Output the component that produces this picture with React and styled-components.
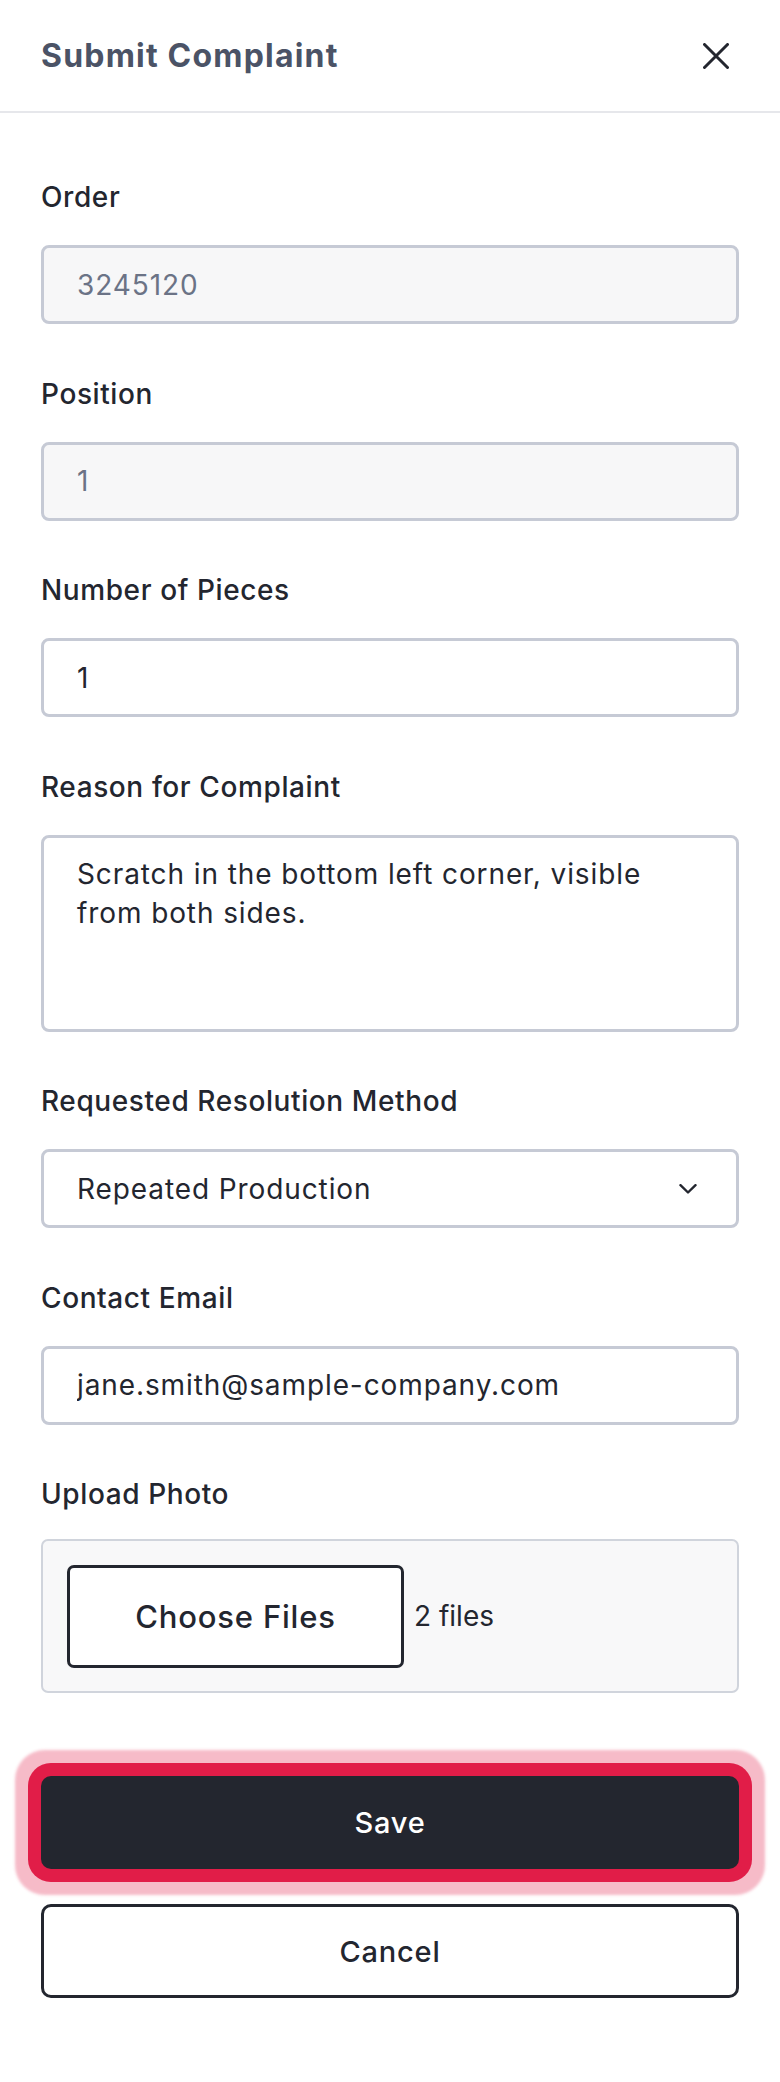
import React, { useState } from 'react'
import styled, { createGlobalStyle } from 'styled-components'

const GlobalStyle = createGlobalStyle`
    * {
        box-sizing: border-box;
    }
    body {
        margin: 0;
        background: #ffffff;
        font-family: "Inter", "Noto Sans", sans-serif;
        color: #23262f;
    }
`

const Panel = styled.div`
    width: 780px;
    min-height: 2082px;
    background: #ffffff;
    display: flex;
    flex-direction: column;
`

const Header = styled.header`
    height: 113px;
    padding: 0 41px;
    display: flex;
    align-items: center;
    justify-content: space-between;
    border-bottom: 2px solid #e6e7eb;
`

const Title = styled.h1`
    margin: 0;
    font-size: 32px;
    font-weight: 700;
    color: #4b5366;
    letter-spacing: 1.2px;
`

const CloseButton = styled.button`
    width: 46px;
    height: 46px;
    padding: 0;
    border: none;
    background: transparent;
    display: flex;
    align-items: center;
    justify-content: center;
    cursor: pointer;
`

const Form = styled.form`
    padding: 64px 41px 0;
    display: flex;
    flex-direction: column;
    gap: 49.5px;
`

const Field = styled.div`
    display: flex;
    flex-direction: column;
    gap: ${props => props.$gap || 28}px;
`

const Label = styled.label`
    font-size: 28px;
    line-height: 40px;
    font-weight: 500;
    letter-spacing: 0.6px;
    color: #23262f;
`

const Input = styled.input`
    width: 100%;
    height: 79px;
    padding: 0 33px;
    border: 3px solid #c6cad5;
    border-radius: 8px;
    background: ${props => (props.disabled ? '#f7f7f8' : '#ffffff')};
    color: ${props => (props.disabled ? '#6b7386' : '#23262f')};
    font-family: inherit;
    font-size: 28px;
    letter-spacing: 0.9px;
    outline: none;
    -webkit-text-fill-color: ${props => (props.disabled ? '#6b7386' : '#23262f')};
    opacity: 1;
`

const TextArea = styled.textarea`
    width: 100%;
    height: 197px;
    padding: 17px 33px;
    border: 3px solid #c6cad5;
    border-radius: 8px;
    background: #ffffff;
    color: #23262f;
    font-family: inherit;
    font-size: 28px;
    letter-spacing: 0.9px;
    line-height: 39px;
    outline: none;
    resize: none;
`

const SelectWrap = styled.div`
    position: relative;
`

const Select = styled.select`
    width: 100%;
    height: 79px;
    padding: 0 80px 0 33px;
    border: 3px solid #c6cad5;
    border-radius: 8px;
    background: #ffffff;
    color: #23262f;
    font-family: inherit;
    font-size: 28px;
    letter-spacing: 0.9px;
    appearance: none;
    outline: none;
`

const Chevron = styled.svg`
    position: absolute;
    right: 42px;
    top: 50%;
    transform: translateY(-50%);
    pointer-events: none;
`

const UploadBox = styled.div`
    height: 154px;
    padding: 0 24px;
    border: 2px solid #d0d4dc;
    border-radius: 7px;
    background: #f8f8f9;
    display: flex;
    align-items: center;
    gap: 10px;
`

const ChooseButton = styled.button`
    width: 337px;
    height: 103px;
    border: 3px solid #23262f;
    border-radius: 7px;
    background: #ffffff;
    color: #23262f;
    font-family: inherit;
    font-size: 31px;
    font-weight: 500;
    letter-spacing: 0.8px;
    cursor: pointer;
`

const FileCount = styled.span`
    font-size: 28px;
    color: #23262f;
`

const Actions = styled.div`
    padding: 83px 41px 0;
    display: flex;
    flex-direction: column;
    gap: 35px;
`

const ActionButton = styled.button`
    width: 100%;
    height: ${props => (props.$primary ? 93 : 94)}px;
    border-radius: 10px;
    border: ${props => (props.$primary ? 'none' : '3px solid #23262f')};
    background: ${props => (props.$primary ? '#23262f' : '#ffffff')};
    color: ${props => (props.$primary ? '#ffffff' : '#23262f')};
    font-family: inherit;
    font-size: 29px;
    font-weight: 500;
    letter-spacing: 0.8px;
    cursor: pointer;
    box-shadow: ${props => (props.$primary
        ? '0 0 0 13px #e11d48, 0 0 3px 26px rgba(225, 29, 72, 0.3)'
        : 'none')};
`

const App = () => {
    const [pieces, setPieces] = useState('1')
    const [reason, setReason] = useState('Scratch in the bottom left corner, visible from both sides.')
    const [method, setMethod] = useState('repeated')
    const [email, setEmail] = useState('jane.smith@sample-company.com')

    return (
        <Panel>
            <GlobalStyle />
            <Header>
                <Title>Submit Complaint</Title>
                <CloseButton type="button" aria-label="Close">
                    <svg width="26" height="26" viewBox="0 0 26 26" fill="none">
                        <path d="M1.5 1.5 24.5 24.5M24.5 1.5 1.5 24.5" stroke="#23262f" strokeWidth="3" strokeLinecap="round" />
                    </svg>
                </CloseButton>
            </Header>
            <Form onSubmit={e => e.preventDefault()}>
                <Field>
                    <Label>Order</Label>
                    <Input value="3245120" disabled readOnly />
                </Field>
                <Field>
                    <Label>Position</Label>
                    <Input value="1" disabled readOnly />
                </Field>
                <Field>
                    <Label>Number of Pieces</Label>
                    <Input value={pieces} onChange={e => setPieces(e.target.value)} />
                </Field>
                <Field>
                    <Label>Reason for Complaint</Label>
                    <TextArea value={reason} onChange={e => setReason(e.target.value)} />
                </Field>
                <Field>
                    <Label>Requested Resolution Method</Label>
                    <SelectWrap>
                        <Select value={method} onChange={e => setMethod(e.target.value)}>
                            <option value="repeated">Repeated Production</option>
                            <option value="discount">Discount</option>
                            <option value="refund">Refund</option>
                        </Select>
                        <Chevron width="18" height="10" viewBox="0 0 18 10" fill="none">
                            <path d="M1.5 1.2 9 8.5l7.5-7.3" stroke="#23262f" strokeWidth="2.4" strokeLinecap="round" strokeLinejoin="round" />
                        </Chevron>
                    </SelectWrap>
                </Field>
                <Field>
                    <Label>Contact Email</Label>
                    <Input type="email" value={email} onChange={e => setEmail(e.target.value)} />
                </Field>
                <Field $gap={25}>
                    <Label>Upload Photo</Label>
                    <UploadBox>
                        <ChooseButton type="button">Choose Files</ChooseButton>
                        <FileCount>2 files</FileCount>
                    </UploadBox>
                </Field>
            </Form>
            <Actions>
                <ActionButton type="button" $primary>Save</ActionButton>
                <ActionButton type="button">Cancel</ActionButton>
            </Actions>
        </Panel>
    )
}

export default App
